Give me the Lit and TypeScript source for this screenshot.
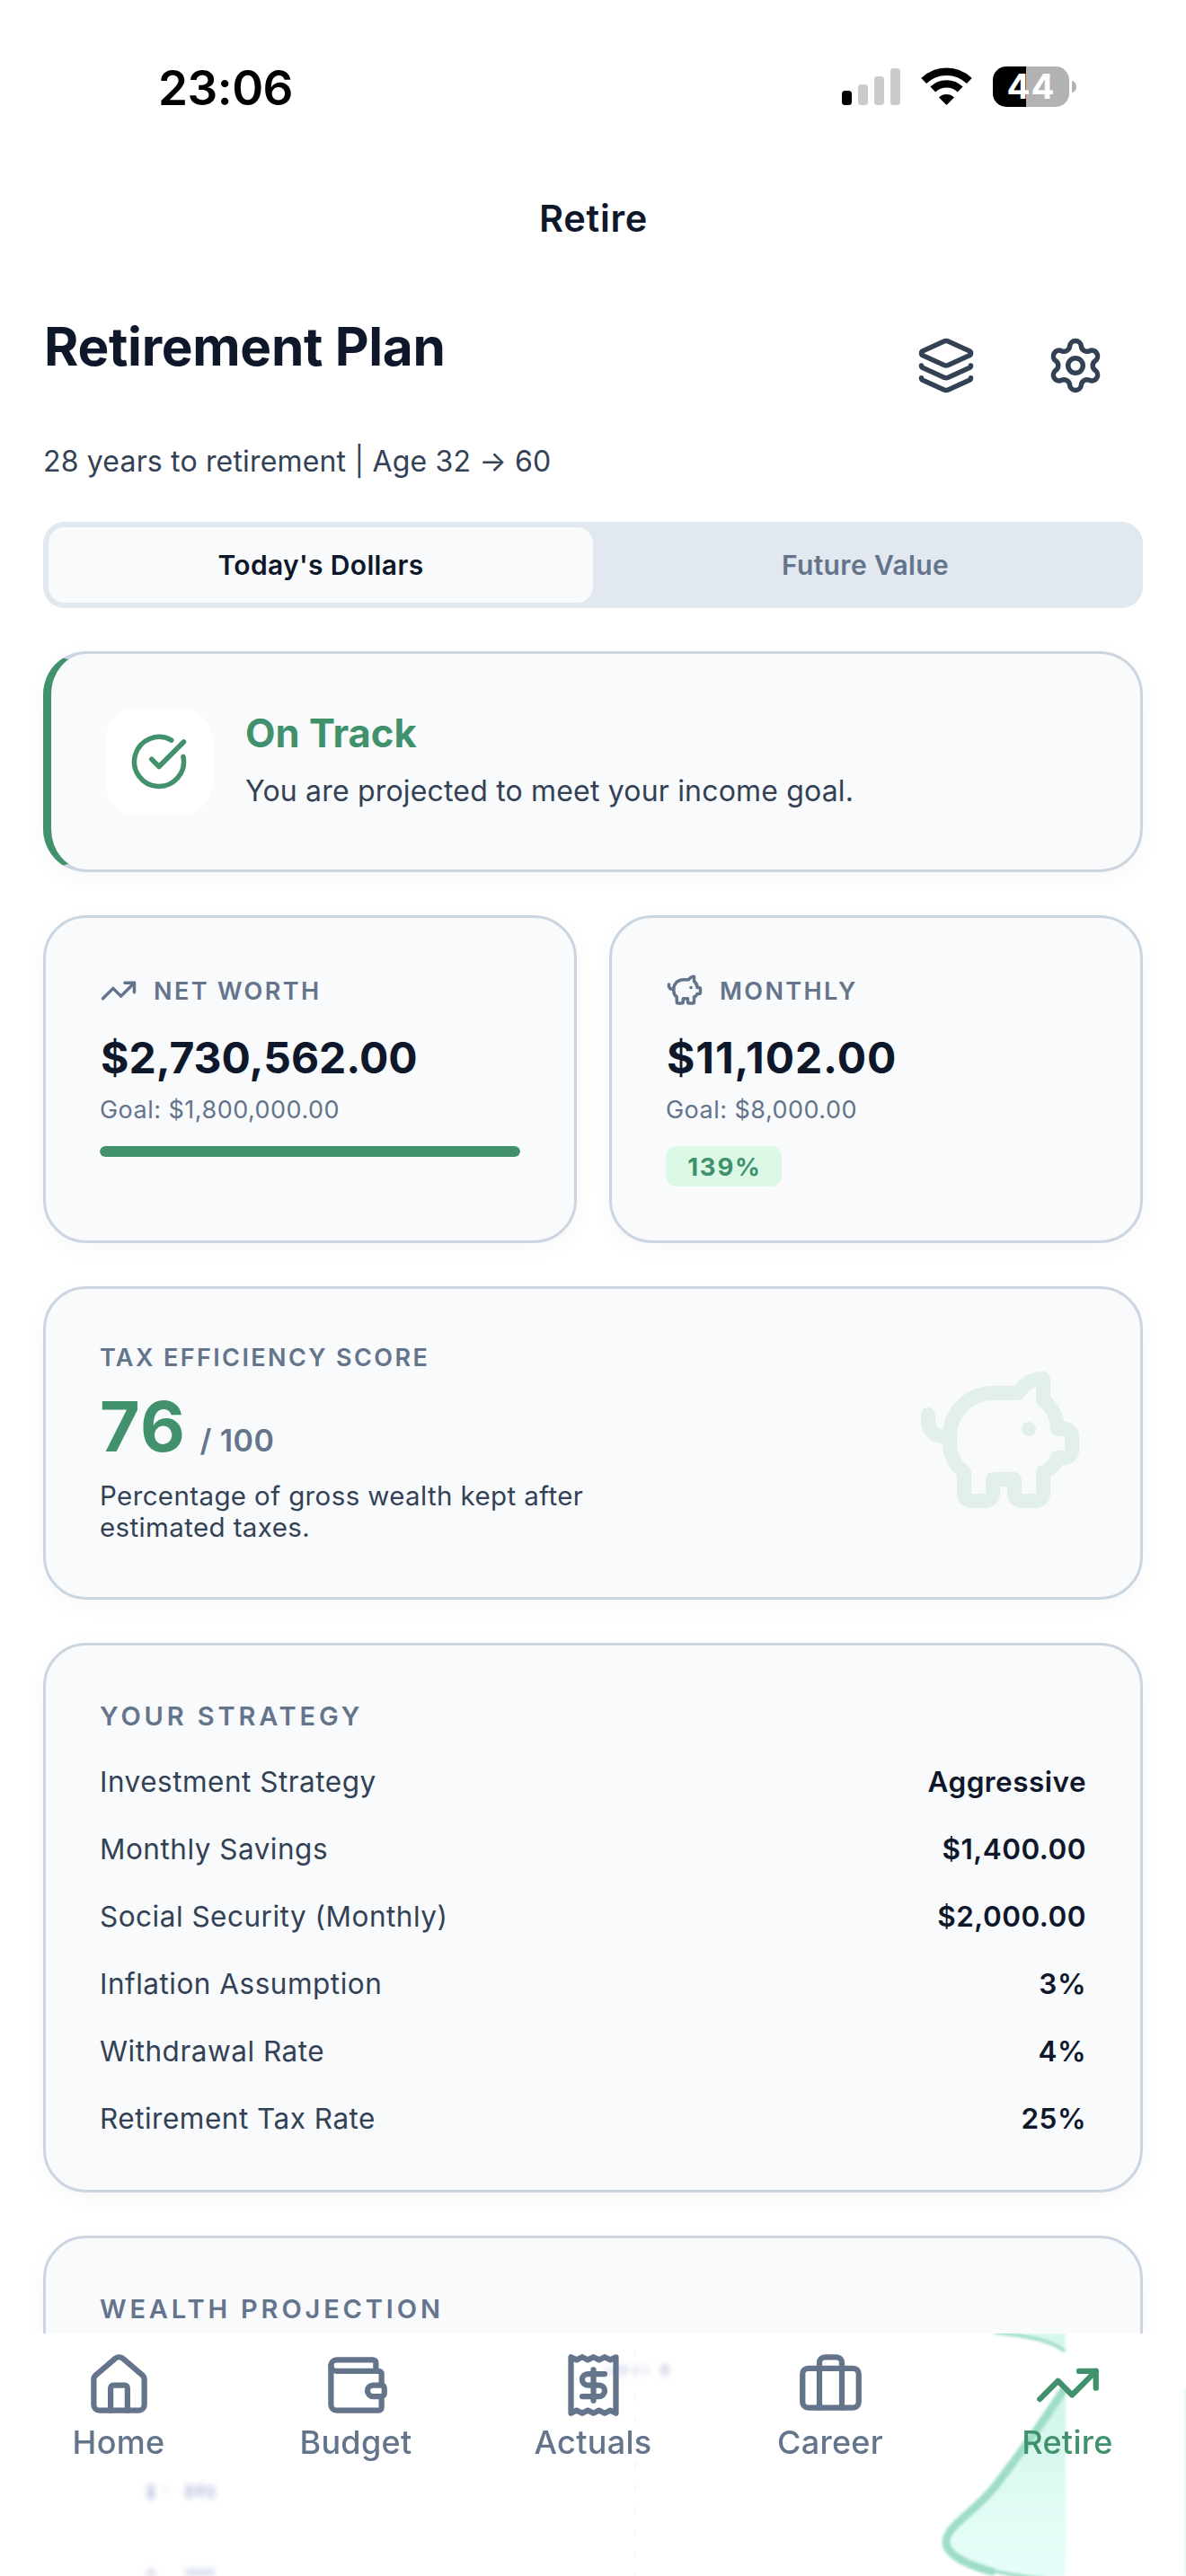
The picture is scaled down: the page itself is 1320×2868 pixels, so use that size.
import { LitElement, html, svg, css, nothing } from "lit";
import { customElement, property } from "lit/decorators.js";
import { classMap } from "lit/directives/class-map.js";

const ICONS = {
  layers: svg`
    <path d="M12.83 2.18a2 2 0 0 0-1.66 0L2.6 6.08a1 1 0 0 0 0 1.83l8.58 3.91a2 2 0 0 0 1.66 0l8.58-3.9a1 1 0 0 0 0-1.83z"/>
    <path d="M2 12a1 1 0 0 0 .58.91l8.6 3.91a2 2 0 0 0 1.65 0l8.58-3.9A1 1 0 0 0 22 12"/>
    <path d="M2 17a1 1 0 0 0 .58.91l8.6 3.91a2 2 0 0 0 1.65 0l8.58-3.9A1 1 0 0 0 22 17"/>`,
  settings: svg`
    <path d="M9.671 4.136a2.34 2.34 0 0 1 4.659 0 2.34 2.34 0 0 0 3.319 1.915 2.34 2.34 0 0 1 2.33 4.033 2.34 2.34 0 0 0 0 3.831 2.34 2.34 0 0 1-2.33 4.033 2.34 2.34 0 0 0-3.319 1.915 2.34 2.34 0 0 1-4.659 0 2.34 2.34 0 0 0-3.32-1.915 2.34 2.34 0 0 1-2.33-4.033 2.34 2.34 0 0 0 0-3.831A2.34 2.34 0 0 1 6.35 6.051a2.34 2.34 0 0 0 3.319-1.915"/>
    <circle cx="12" cy="12" r="3"/>`,
  check: svg`
    <path d="M21.801 10A10 10 0 1 1 17 3.335"/>
    <path d="m9 11 3 3L22 4"/>`,
  trend: svg`
    <path d="M16 7h6v6"/>
    <path d="m22 7-8.5 8.5-5-5L2 17"/>`,
  piggy: svg`
    <path d="M11 17h3v2a1 1 0 0 0 1 1h2a1 1 0 0 0 1-1v-3a3.16 3.16 0 0 0 2-2h1a1 1 0 0 0 1-1v-2a1 1 0 0 0-1-1h-1a5 5 0 0 0-2-4V3a4 4 0 0 0-3.2 1.6l-.3.4H11a6 6 0 0 0-6 6v1a5 5 0 0 0 2 4v3a1 1 0 0 0 1 1h2a1 1 0 0 0 1-1z"/>
    <path d="M16 10h.01"/>
    <path d="M2 8v1a2 2 0 0 0 2 2h1"/>`,
  house: svg`
    <path d="M15 21v-8a1 1 0 0 0-1-1h-4a1 1 0 0 0-1 1v8"/>
    <path d="M3 10a2 2 0 0 1 .709-1.528l7-5.999a2 2 0 0 1 2.582 0l7 5.999A2 2 0 0 1 21 10v9a2 2 0 0 1-2 2H5a2 2 0 0 1-2-2z"/>`,
  wallet: svg`
    <path d="M19 7V4a1 1 0 0 0-1-1H5a2 2 0 0 0 0 4h15a1 1 0 0 1 1 1v4h-3a2 2 0 0 0 0 4h3a1 1 0 0 0 1-1v-2a1 1 0 0 0-1-1"/>
    <path d="M3 5v14a2 2 0 0 0 2 2h15a1 1 0 0 0 1-1v-4"/>`,
  receipt: svg`
    <path d="M4 2v20l2-1 2 1 2-1 2 1 2-1 2 1 2-1 2 1V2l-2 1-2-1-2 1-2-1-2 1-2-1-2 1Z"/>
    <path d="M16 8h-6a2 2 0 1 0 0 4h4a2 2 0 1 1 0 4H8"/>
    <path d="M12 17.5v-11"/>`,
  briefcase: svg`
    <path d="M16 20V4a2 2 0 0 0-2-2h-4a2 2 0 0 0-2 2v16"/>
    <rect width="20" height="14" x="2" y="6" rx="2"/>`,
};

type IconName = keyof typeof ICONS;

@customElement("line-icon")
export class LineIcon extends LitElement {
  @property() name: IconName = "trend";

  static styles = css`
    :host { display: block; flex: none; }
    .glyph {
      display: block; width: 100%; height: 100%;
      fill: none; stroke: currentColor; stroke-width: 2;
      stroke-linecap: round; stroke-linejoin: round;
    }
  `;

  render() {
    return html`<svg class="glyph" viewBox="0 0 24 24">${ICONS[this.name]}</svg>`;
  }
}

@customElement("status-bar")
export class StatusBar extends LitElement {
  static styles = css`
    :host {
      display: flex; justify-content: space-between; align-items: center;
      height: 195px; box-sizing: border-box; padding: 0 122px 0 176px;
      color: #000;
    }
    .time { font-size: 53px; font-weight: 600; letter-spacing: -0.5px; line-height: 64px; }
    .indicators { display: flex; align-items: center; height: 47px; padding-bottom: 2px; }
    .signal { display: block; width: 65px; height: 45px; margin-right: 23px; }
    .wifi { display: block; width: 57px; height: 45px; margin-right: 23px; }
    .on { fill: #000; }
    .off { fill: #cbcbcb; }
    .arc { fill: none; stroke: #000; }
    .battery {
      display: flex; align-items: center; justify-content: center;
      width: 85px; height: 45px; border-radius: 15px;
      background: linear-gradient(to right, #000 37px, #b2b2b2 37px);
      color: #fff; font-size: 38.5px; font-weight: 700; line-height: 45px; letter-spacing: 1px;
    }
    .tip { display: block; width: 5px; height: 13px; margin-left: 3px; border-radius: 0 5px 5px 0 / 0 6.5px 6.5px 0; background: #b2b2b2; }
  `;

  render() {
    return html`
      <span class="time">23:06</span>
      <div class="indicators">
        <svg class="signal" viewBox="0 0 65 45">
          <rect class="on" x="0" y="27" width="11" height="16" rx="3.5"/>
          <rect class="off" x="18" y="20" width="11" height="23" rx="3.5"/>
          <rect class="off" x="36" y="11" width="11" height="32" rx="3.5"/>
          <rect class="off" x="54" y="2" width="11" height="41" rx="3.5"/>
        </svg>
        <svg class="wifi" viewBox="0 0 57 45">
          <path class="on" d="M28.5 43 L20 34.4 a12.4 12.4 0 0 1 17 0 Z"/>
          <path class="arc" stroke-width="8.4" d="M13.3 25.6 a21.7 21.7 0 0 1 30.4 0"/>
          <path class="arc" stroke-width="8.4" d="M3.2 16 a36.4 36.4 0 0 1 50.6 0"/>
        </svg>
        <span class="battery">44</span>
        <span class="tip"></span>
      </div>
    `;
  }
}

const STRATEGY: [string, string][] = [
  ["Investment Strategy", "Aggressive"],
  ["Monthly Savings", "$1,400.00"],
  ["Social Security (Monthly)", "$2,000.00"],
  ["Inflation Assumption", "3%"],
  ["Withdrawal Rate", "4%"],
  ["Retirement Tax Rate", "25%"],
];

const TABS: { label: string; icon: IconName; active?: boolean }[] = [
  { label: "Home", icon: "house" },
  { label: "Budget", icon: "wallet" },
  { label: "Actuals", icon: "receipt" },
  { label: "Career", icon: "briefcase" },
  { label: "Retire", icon: "trend", active: true },
];

@customElement("tab-bar")
export class TabBar extends LitElement {
  static styles = css`
    :host { display: block; position: relative; height: 270px; overflow: hidden; background: #fff; }
    .backdrop { position: absolute; inset: 0; width: 100%; height: 100%; }
    .curve { fill: none; stroke: #9fddc8; stroke-width: 9; stroke-linecap: round; }
    .thin { stroke-width: 4; }
    .smudge { fill: #a9b0d6; }
    .grid-line { stroke: #f2f7fe; stroke-width: 2; stroke-dasharray: 7 18; }
    .tabs { position: relative; display: grid; grid-template-columns: repeat(5, 1fr); padding-top: 20px; }
    .tab { display: flex; flex-direction: column; align-items: center; gap: 4px; color: #64748b; }
    .tab.active { color: #40916c; }
    .icon { width: 75px; height: 75px; }
    .label { font-size: 36px; font-weight: 500; line-height: 44px; letter-spacing: 0.3px; }
  `;

  private backdrop() {
    return html`
      <svg class="backdrop" viewBox="0 0 1320 270">
        <defs>
          <linearGradient id="area" x1="0" y1="0" x2="0" y2="1">
            <stop offset="0" stop-color="#cff4e8"/>
            <stop offset="0.6" stop-color="#e0fbf4"/>
            <stop offset="1" stop-color="#e6fefa"/>
          </linearGradient>
          <filter id="soft" x="-20%" y="-20%" width="140%" height="140%"><feGaussianBlur stdDeviation="1.8"/></filter>
          <filter id="haze" x="-50%" y="-50%" width="200%" height="200%"><feGaussianBlur stdDeviation="3.2"/></filter>
          <clipPath id="plot"><rect x="1000" y="0" width="186" height="270"/></clipPath>
        </defs>
        <g filter="url(#soft)">
          <g clip-path="url(#plot)">
            <path fill="#d6f8ee" d="M1116 -2 C1146 1 1172 8 1190 24 V-2 Z"/>
            <path fill="url(#area)" d="M1188 62 C1160 95 1138 130 1106 169 C1080 200 1052 215 1052 232 C1052 250 1100 268 1190 276 Z"/>
          </g>
          <path class="curve thin" d="M1108 -1 C1140 2 1171 8 1184 19"/>
          <path class="curve" d="M1183 64 C1160 100 1138 130 1110 167 C1085 200 1053 214 1053 232 C1053 247 1078 258 1104 265"/>
          <path class="curve thin" d="M1100 263 C1120 268 1140 271 1165 273"/>
          <path stroke="#c9f5ea" stroke-width="2" d="M1320 60 V270"/>
        </g>
        <g class="smudge" filter="url(#haze)">
          <rect x="164" y="168" width="8" height="17" rx="4" opacity="0.6"/>
          <rect x="181" y="168" width="5" height="9" opacity="0.18"/>
          <rect x="206" y="168" width="9" height="16" rx="3" opacity="0.5"/>
          <rect x="217" y="168" width="12" height="14" rx="3" opacity="0.45"/>
          <rect x="231" y="169" width="8" height="15" rx="3" opacity="0.48"/>
          <rect x="164" y="262" width="8" height="8" opacity="0.5"/>
          <rect x="206" y="262" width="33" height="8" opacity="0.42"/>
          <rect x="672" y="36" width="18" height="11" opacity="0.2"/>
          <rect x="690" y="35" width="8" height="11" rx="4" opacity="0.42"/>
          <rect x="704" y="36" width="6" height="10" rx="3" opacity="0.36"/>
          <rect x="714" y="36" width="9" height="9" opacity="0.22"/>
          <rect x="736" y="34" width="8" height="13" rx="4" opacity="0.5"/>
        </g>
        <path class="grid-line" d="M707 18 V270"/>
      </svg>
    `;
  }

  render() {
    return html`
      ${this.backdrop()}
      <nav class="tabs">
        ${TABS.map(
          (t) => html`
            <div class=${classMap({ tab: true, active: !!t.active })}>
              <line-icon class="icon" .name=${t.icon}></line-icon>
              <span class="label">${t.label}</span>
            </div>
          `,
        )}
      </nav>
    `;
  }
}

@customElement("app-root")
export class AppRoot extends LitElement {
  static styles = css`
    :host {
      display: flex; flex-direction: column;
      width: 1320px; height: 2868px; overflow: hidden;
      background: #fff; color: #0f172a;
      font-family: "Inter", "Liberation Sans", sans-serif;
    }
    .nav-title {
      height: 96px; text-align: center; padding-left: 1px;
      font-size: 41.5px; line-height: 96px; font-weight: 600; letter-spacing: 0.7px; flex: none;
    }
    .content { flex: 1; min-height: 0; overflow: hidden; padding: 59px 48px 0; }
    .heading { display: flex; justify-content: space-between; height: 114px; }
    .title { margin: 0; font-size: 58.5px; font-weight: 700; line-height: 72px; letter-spacing: -0.3px; margin-left: 1px; }
    .actions { display: flex; align-items: center; gap: 78px; padding-right: 42px; color: #334155; }
    .action { width: 66px; height: 66px; }
    .subtitle { height: 117px; font-size: 32px; line-height: 99px; letter-spacing: 0.17px; color: #334155; }

    .segmented {
      display: grid; grid-template-columns: 1fr 1fr; box-sizing: border-box;
      height: 96px; padding: 6px; border-radius: 24px; background: #e2e8f0;
    }
    .segment {
      display: flex; align-items: center; justify-content: center; border-radius: 18px;
      font-size: 30px; font-weight: 600; letter-spacing: 0.35px; color: #64748b;
    }
    .segment.selected { background: #f8fafc; color: #0f172a; }

    .card {
      box-sizing: border-box; padding: 60px; border: 3px solid #cbd5e1; border-radius: 48px;
      background: #f8fafc; box-shadow: 0 6px 24px rgba(0, 0, 0, 0.035);
    }
    .status {
      display: flex; align-items: center; gap: 36px; height: 246px; margin-top: 48px;
      border-left: 9px solid #40916c;
    }
    .badge-icon {
      display: flex; align-items: center; justify-content: center; flex: none;
      width: 120px; height: 120px; border-radius: 36px; background: #fff; color: #40916c;
    }
    .check { width: 66px; height: 66px; }
    .status-text { display: flex; flex-direction: column; gap: 5px; }
    .status-title { font-size: 43.5px; font-weight: 700; line-height: 60px; color: #40916c; }
    .status-note { font-size: 32px; line-height: 60px; letter-spacing: 0.18px; color: #334155; }

    .stats { display: grid; grid-template-columns: 1fr 1fr; gap: 36px; margin-top: 48px; }
    .stat { height: 365px; }
    .stat-head { display: flex; align-items: center; gap: 18px; height: 42px; color: #64748b; }
    .stat-icon { width: 42px; height: 42px; }
    .overline { font-size: 27px; font-weight: 600; line-height: 33px; letter-spacing: 2.4px; color: #64748b; }
    .value { margin-top: 24px; font-size: 48px; font-weight: 700; line-height: 60px; margin-left: 1px; }
    .value.spaced { letter-spacing: 0.9px; }
    .goal { margin-top: 9px; font-size: 27px; line-height: 37px; letter-spacing: 0.48px; color: #64748b; }
    .meter { height: 12px; margin-top: 22px; border-radius: 6px; background: #e2e8f0; overflow: hidden; }
    .fill { height: 100%; border-radius: 6px; background: #40916c; }
    .chip {
      display: flex; align-items: center; justify-content: center; width: 129px; height: 45px;
      box-sizing: border-box; padding-left: 2px;
      margin-top: 22px; border-radius: 12px; background: #dcf9e7; color: #40916c;
      font-size: 27.5px; font-weight: 700; letter-spacing: 1.8px;
    }

    .tax { display: flex; justify-content: space-between; align-items: center; height: 349px; margin-top: 48px; }
    .tax-text { width: 600px; }
    .score { display: flex; align-items: baseline; gap: 15px; height: 96px; margin-top: 12px; line-height: 96px; }
    .score-value { font-size: 77px; font-weight: 700; letter-spacing: 1.5px; color: #40916c; }
    .score-max { font-size: 34px; font-weight: 600; letter-spacing: 0.4px; color: #64748b; }
    .tax-note { margin-top: 12px; font-size: 29.5px; line-height: 35px; letter-spacing: 0.38px; color: #334155; }
    .pig { width: 192px; height: 192px; color: #e2efec; }

    .section { margin-top: 48px; }
    .section-title { font-size: 29px; font-weight: 600; line-height: 37px; letter-spacing: 3.86px; color: #64748b; }
    .rows { display: flex; flex-direction: column; gap: 36px; margin-top: 35px; }
    .row { display: flex; justify-content: space-between; font-size: 31.5px; line-height: 39px; }
    .row-label { color: #334155; letter-spacing: 0.5px; }
    .row-value { font-weight: 600; letter-spacing: 0.48px; }
    .projection { height: 600px; }
  `;

  private stat(icon: IconName, label: string, value: string, goal: string, progress?: number, chip?: string) {
    return html`
      <div class="card stat">
        <div class="stat-head">
          <line-icon class="stat-icon" .name=${icon}></line-icon>
          <span class="overline">${label}</span>
        </div>
        <div class=${classMap({ value: true, spaced: !!chip })}>${value}</div>
        <div class="goal">Goal: ${goal}</div>
        ${progress !== undefined
          ? html`<div class="meter"><div class="fill" style="width:${progress}%"></div></div>`
          : nothing}
        ${chip ? html`<div class="chip">${chip}</div>` : nothing}
      </div>
    `;
  }

  render() {
    return html`
      <status-bar></status-bar>
      <div class="nav-title">Retire</div>
      <main class="content">
        <div class="heading">
          <h1 class="title">Retirement Plan</h1>
          <div class="actions">
            <line-icon class="action" .name=${"layers"}></line-icon>
            <line-icon class="action" .name=${"settings"}></line-icon>
          </div>
        </div>
        <div class="subtitle">28 years to retirement | Age 32 → 60</div>

        <div class="segmented">
          <div class="segment selected">Today's Dollars</div>
          <div class="segment">Future Value</div>
        </div>

        <div class="card status">
          <div class="badge-icon"><line-icon class="check" .name=${"check"}></line-icon></div>
          <div class="status-text">
            <div class="status-title">On Track</div>
            <div class="status-note">You are projected to meet your income goal.</div>
          </div>
        </div>

        <div class="stats">
          ${this.stat("trend", "NET WORTH", "$2,730,562.00", "$1,800,000.00", 100)}
          ${this.stat("piggy", "MONTHLY", "$11,102.00", "$8,000.00", undefined, "139%")}
        </div>

        <div class="card tax">
          <div class="tax-text">
            <div class="overline">TAX EFFICIENCY SCORE</div>
            <div class="score">
              <span class="score-value">76</span>
              <span class="score-max">/ 100</span>
            </div>
            <div class="tax-note">Percentage of gross wealth kept after<br />estimated taxes.</div>
          </div>
          <line-icon class="pig" .name=${"piggy"}></line-icon>
        </div>

        <div class="card section">
          <div class="section-title">YOUR STRATEGY</div>
          <div class="rows">
            ${STRATEGY.map(
              ([label, value]) => html`
                <div class="row">
                  <span class="row-label">${label}</span>
                  <span class="row-value">${value}</span>
                </div>
              `,
            )}
          </div>
        </div>

        <div class="card section projection">
          <div class="section-title">WEALTH PROJECTION</div>
        </div>
      </main>
      <tab-bar></tab-bar>
    `;
  }
}
